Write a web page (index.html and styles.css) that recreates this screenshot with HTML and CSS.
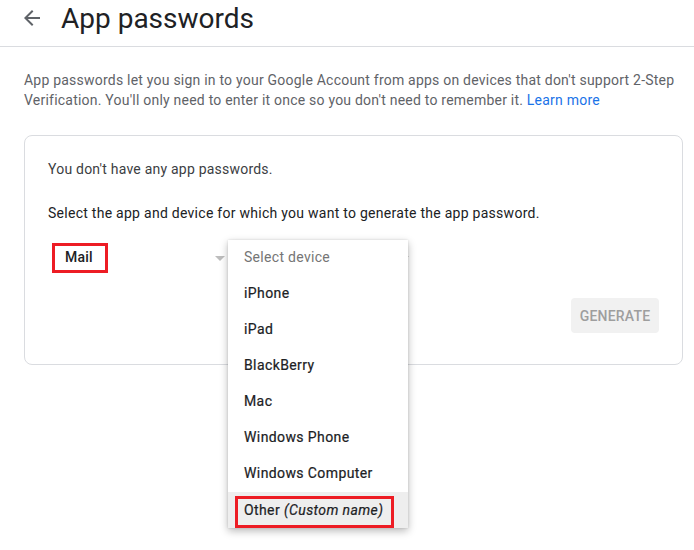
FILE: index.html
```html
<!DOCTYPE html>
<html lang="en">
<head>
<meta charset="utf-8">
<title>App passwords</title>
<link rel="stylesheet" href="styles.css">
</head>
<body>
<header class="topbar">
  <svg class="back" width="24" height="24" viewBox="0 0 24 24" aria-hidden="true"><path d="M20 11H7.83l5.59-5.59L12 4l-8 8 8 8 1.41-1.41L7.830 13H20v-2z" fill="#5f6368"/></svg>
  <h1 class="title">App passwords</h1>
</header>
<main class="page">
  <p class="intro">App passwords let you sign in to your Google Account from apps on devices that don't support 2-Step Verification. You'll only need to enter it once so you don't need to remember it. <a class="link" href="#">Learn more</a></p>
  <section class="card">
    <p class="msg">You don't have any app passwords.</p>
    <p class="msg strong">Select the app and device for which you want to generate the app password.</p>
    <div class="selects">
      <div class="select app">
        <span class="mark">Mail</span>
        <span class="caret"></span>
      </div>
      <div class="select device">
        <span class="placeholder">Select device</span>
        <span class="caret"></span>
      </div>
      <ul class="menu">
        <li class="item muted">Select device</li>
        <li class="item">iPhone</li>
        <li class="item">iPad</li>
        <li class="item">BlackBerry</li>
        <li class="item">Mac</li>
        <li class="item">Windows Phone</li>
        <li class="item">Windows Computer</li>
        <li class="item active"><span class="mark other">Other <em>(Custom name)</em></span></li>
      </ul>
    </div>
    <div class="actions">
      <button class="generate" type="button">Generate</button>
    </div>
  </section>
</main>
</body>
</html>
```
FILE: styles.css
```css
* { box-sizing: border-box; }
html, body { margin: 0; padding: 0; background: #fff; }
body {
  font-family: Roboto, "Liberation Sans", Arial, sans-serif;
  font-size: 14px;
  letter-spacing: 0.22px;
  color: #202124;
  width: 694px;
  height: 550px;
  overflow: hidden;
}
.topbar {
  height: 47px;
  border-bottom: 1px solid #dadce0;
  display: flex;
  align-items: flex-start;
  padding-left: 20px;
}
.back { margin-top: 6px; width: 24px; height: 24px; }
.title {
  margin: 0 0 0 17px;
  font-family: Roboto, "Open Sans", sans-serif;
  font-weight: 400;
  font-size: 28px;
  line-height: 38px;
  color: #202124;
  letter-spacing: 0;
}
.page { padding: 23px 11px 0 24px; }
.intro {
  margin: 0;
  line-height: 20px;
  color: #5f6368;
  font-size: 14px;
}
.link { color: #1a73e8; text-decoration: none; }
.card {
  margin-top: 25px;
  border: 1px solid #dadce0;
  border-radius: 8px;
  height: 230px;
  padding: 23px 23px 30px 23px;
}
.msg {
  margin: 0 0 24px 0;
  line-height: 20px;
  color: #3c4043;
}
.msg.strong { color: #202124; margin-bottom: 20px; letter-spacing: 0.27px; }
.selects {
  position: relative;
  display: flex;
  height: 30px;
}
.select {
  display: flex;
  align-items: center;
  justify-content: space-between;
  height: 30px;
}
.app { width: 181px; padding-left: 4px; padding-right: 4px; }
.device { width: 180px; padding-left: 16px; color: #757575; }
.mark {
  border: 3px solid #ed1c24;
  display: inline-block;
}
.app .mark {
  height: 30px;
  line-height: 23px;
  padding: 0 12px 0 10px;
  font-weight: 500;
  color: #202124;
}
.caret {
  width: 0;
  height: 0;
  border-left: 5px solid transparent;
  border-right: 5px solid transparent;
  border-top: 5px solid #bdbdbd;
  margin-top: 0;
}
.menu {
  position: absolute;
  left: 180px;
  top: -3px;
  width: 180px;
  margin: 0;
  padding: 0;
  list-style: none;
  background: #fff;
  box-shadow: 0 3px 8px rgba(0, 0, 0, 0.28), 0 0 2px rgba(0, 0, 0, 0.12);
  z-index: 2;
}
.item {
  height: 36px;
  line-height: 35px;
  padding-left: 16px;
  color: #202124;
  font-weight: 400;
  letter-spacing: 0.4px;
  white-space: nowrap;
  -webkit-text-stroke: 0.2px #202124;
}
.item.muted { color: #757575; -webkit-text-stroke: 0; letter-spacing: 0.3px; }
.item.active {
  background: #eeeeee;
  padding: 4px 0 0 7px;
  line-height: normal;
}
.other {
  height: 32px;
  line-height: 23px;
  padding: 0 8px 0 6px;
}
.other em { font-style: italic; }
.actions {
  display: flex;
  justify-content: flex-end;
  margin-top: 25px;
}
.generate {
  width: 88px;
  height: 35px;
  border: 0;
  border-radius: 4px;
  background: #f1f1f1;
  color: #9e9e9e;
  font-family: Roboto, "Liberation Sans", sans-serif;
  font-size: 14px;
  font-weight: 500;
  text-transform: uppercase;
  letter-spacing: 0.2px;
  padding: 0;
}
```
